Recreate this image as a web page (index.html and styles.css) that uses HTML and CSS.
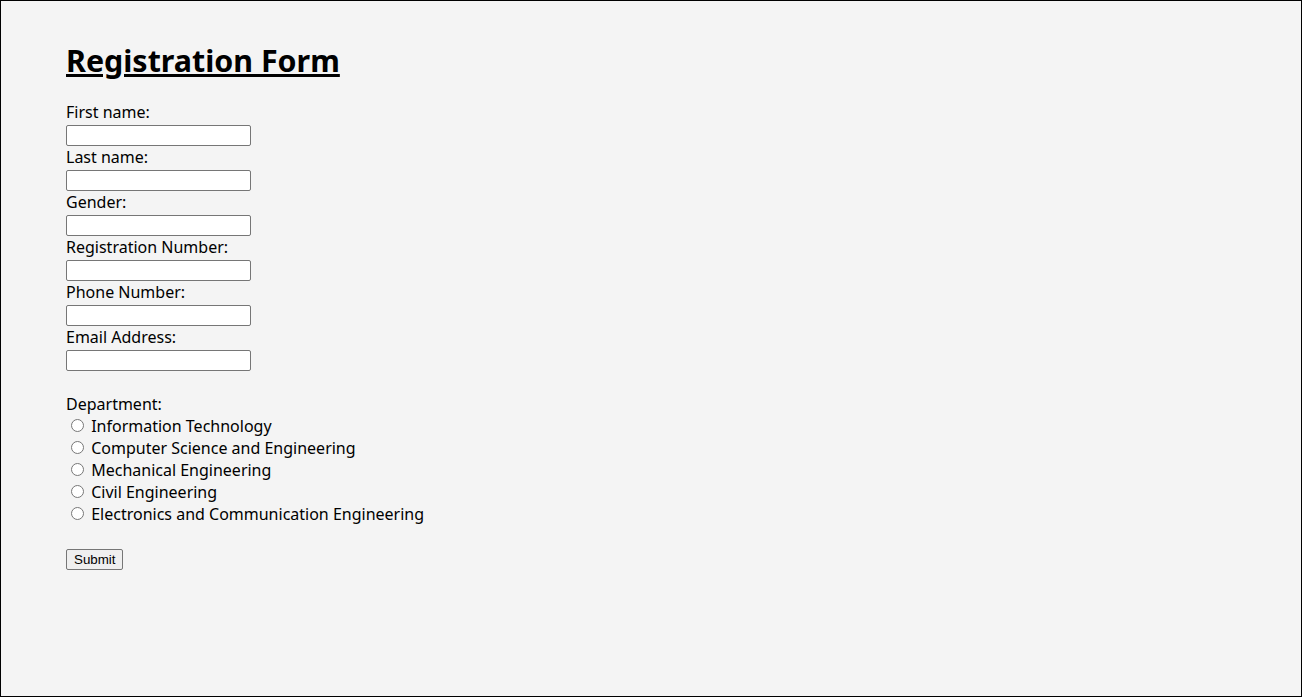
FILE: index.html
```html
<!DOCTYPE html>
<html>
<head>
<meta charset="utf-8">
<link rel="stylesheet" href="styles.css">
<title>Registration Form</title>
</head>
<body>
<div class="page">
  <h1 class="title">Registration Form</h1>
  <form class="form">
    <label>First name:</label><br>
    <input class="field" type="text"><br>
    <label>Last name:</label><br>
    <input class="field" type="text"><br>
    <label>Gender:</label><br>
    <input class="field" type="text"><br>
    <label>Registration Number:</label><br>
    <input class="field" type="text"><br>
    <label>Phone Number:</label><br>
    <input class="field" type="text"><br>
    <label>Email Address:</label><br>
    <input class="field" type="text"><br>
    <br>
    <label>Department:</label><br>
    <input class="radio" type="radio" name="dept"> Information Technology<br>
    <input class="radio" type="radio" name="dept"> Computer Science and Engineering<br>
    <input class="radio" type="radio" name="dept"> Mechanical Engineering<br>
    <input class="radio" type="radio" name="dept"> Civil Engineering<br>
    <input class="radio" type="radio" name="dept"> Electronics and Communication Engineering<br>
    <br>
    <input class="submit" type="submit" value="Submit">
  </form>
</div>
</body>
</html>
```
FILE: styles.css
```css
html, body {
  margin: 0;
  padding: 0;
}
body {
  background: #f4f4f4;
  font-family: "Noto Sans", sans-serif;
  font-size: 16px;
  color: #000;
}
.page {
  box-sizing: border-box;
  height: 697px;
  border: 1px solid #000;
  padding: 16px 0 0 65px;
  background: #f4f4f4;
}
.title {
  font-family: "Noto Sans", sans-serif;
  font-size: 30.4px;
  font-weight: 700;
  text-decoration: underline;
  margin: 23px 0 20px 0;
}
.field {
  box-sizing: border-box;
  width: 185px;
  height: 21px;
  border: 1px solid #767676;
  border-radius: 2px;
  background: #fff;
  padding: 1px 2px;
  margin: 0;
  font-family: "Liberation Sans", sans-serif;
  font-size: 13.33px;
}
.radio {
  margin: 3px 3px 0 5px;
}
.submit {
  font-family: "Liberation Sans", sans-serif;
  font-size: 13.33px;
  padding: 2px 7px;
  border: 1px solid #767676;
  border-radius: 2px;
  background: #efefef;
  color: #000;
  margin: 0;
}
```
